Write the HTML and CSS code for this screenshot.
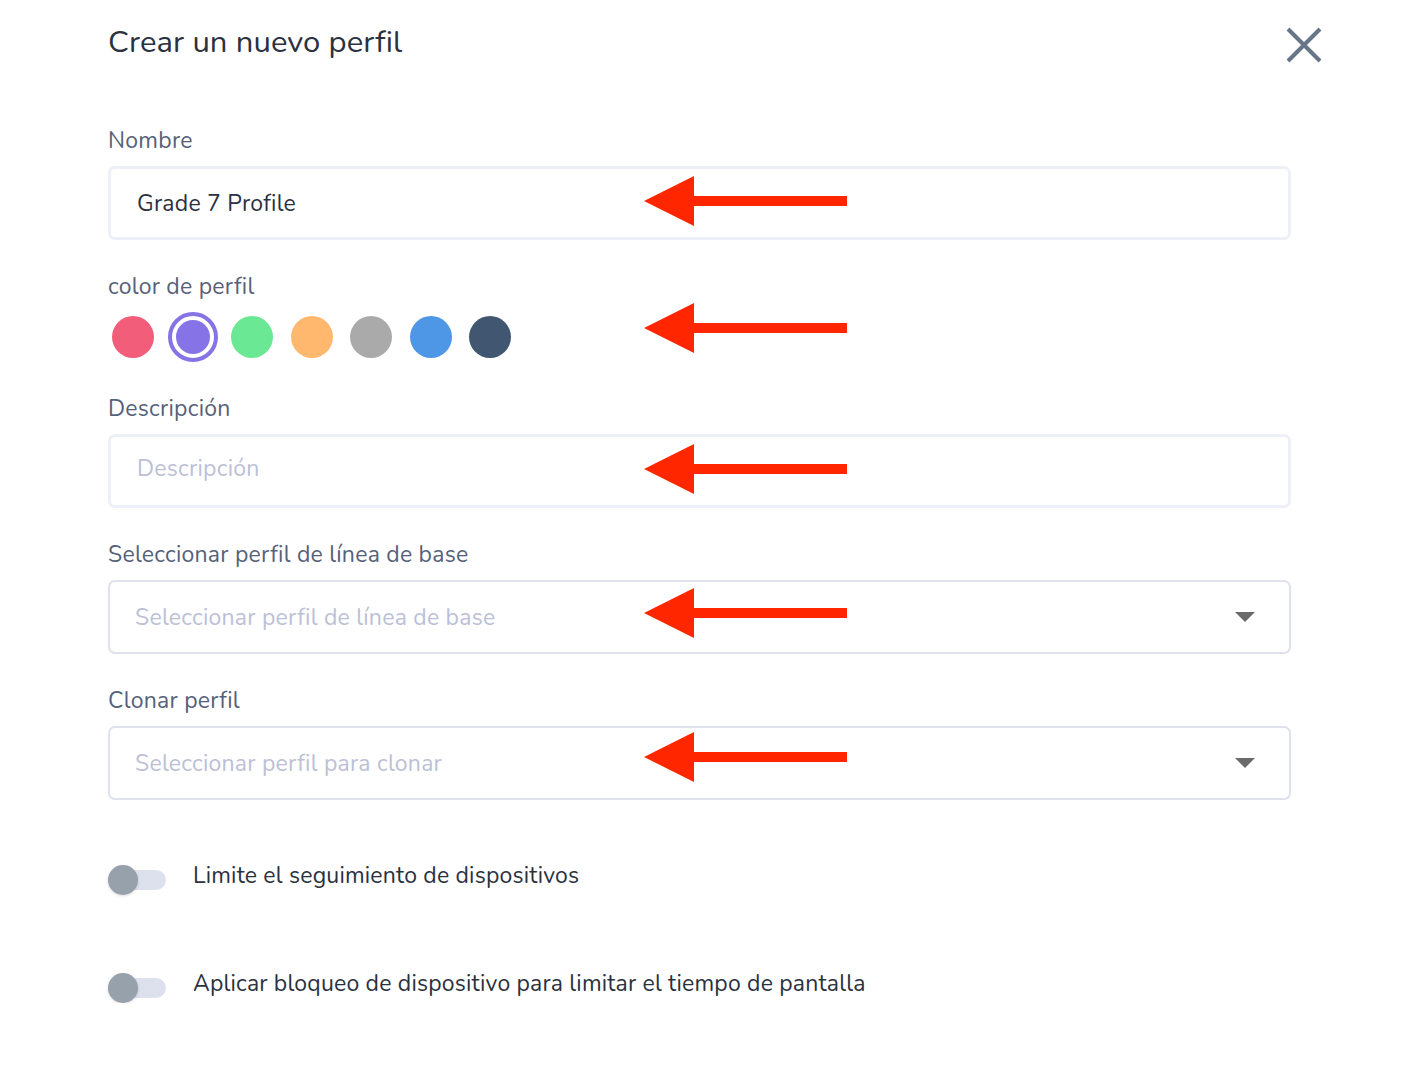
FILE: index.html
```html
<!DOCTYPE html>
<html lang="es">
<head>
<meta charset="utf-8">
<title>Crear un nuevo perfil</title>
<link rel="stylesheet" href="styles.css">
</head>
<body>
<div class="page">
  <div class="header">
    <h1 class="title">Crear un nuevo perfil</h1>
    <button class="close" aria-label="Cerrar">
      <svg width="36" height="36" viewBox="0 0 36 36"><path d="M2 2 L34 34 M34 2 L2 34" stroke="#667587" stroke-width="4" fill="none"/></svg>
    </button>
  </div>

  <form class="form">
    <div class="field field-first">
      <label class="label">Nombre</label>
      <div class="input input-soft"><span class="value">Grade 7 Profile</span></div>
    </div>

    <div class="field">
      <label class="label">color de perfil</label>
      <div class="swatches">
        <span class="swatch c-pink"></span>
        <span class="swatch selected"><span class="dot c-purple"></span></span>
        <span class="swatch c-green"></span>
        <span class="swatch c-orange"></span>
        <span class="swatch c-gray"></span>
        <span class="swatch c-blue"></span>
        <span class="swatch c-navy"></span>
      </div>
    </div>

    <div class="field">
      <label class="label">Descripción</label>
      <div class="input input-soft input-desc"><span class="placeholder">Descripción</span></div>
    </div>

    <div class="field">
      <label class="label">Seleccionar perfil de línea de base</label>
      <div class="input input-select"><span class="placeholder">Seleccionar perfil de línea de base</span><span class="caret"></span></div>
    </div>

    <div class="field">
      <label class="label">Clonar perfil</label>
      <div class="input input-select"><span class="placeholder">Seleccionar perfil para clonar</span><span class="caret"></span></div>
    </div>

    <div class="toggle-row toggle-first">
      <span class="toggle"><span class="knob"></span></span>
      <span class="toggle-label">Limite el seguimiento de dispositivos</span>
    </div>
    <div class="toggle-row toggle-second">
      <span class="toggle"><span class="knob"></span></span>
      <span class="toggle-label">Aplicar bloqueo de dispositivo para limitar el tiempo de pantalla</span>
    </div>
  </form>

  <svg class="arrow a1" width="204" height="52" viewBox="0 0 204 52"><path d="M0 26 L50 1 L50 21 L203 21 L203 31 L50 31 L50 51 Z" fill="#ff2600"/></svg>
  <svg class="arrow a2" width="204" height="52" viewBox="0 0 204 52"><path d="M0 26 L50 1 L50 21 L203 21 L203 31 L50 31 L50 51 Z" fill="#ff2600"/></svg>
  <svg class="arrow a3" width="204" height="52" viewBox="0 0 204 52"><path d="M0 26 L50 1 L50 21 L203 21 L203 31 L50 31 L50 51 Z" fill="#ff2600"/></svg>
  <svg class="arrow a4" width="204" height="52" viewBox="0 0 204 52"><path d="M0 26 L50 1 L50 21 L203 21 L203 31 L50 31 L50 51 Z" fill="#ff2600"/></svg>
  <svg class="arrow a5" width="204" height="52" viewBox="0 0 204 52"><path d="M0 26 L50 1 L50 21 L203 21 L203 31 L50 31 L50 51 Z" fill="#ff2600"/></svg>
</div>
</body>
</html>
```

FILE: styles.css
```css
* { box-sizing: border-box; }
html, body { margin: 0; padding: 0; background: #fff; }
body {
  font-family: "Nunito", "Lato", "Noto Sans", sans-serif;
  color: #2d3748;
}
.page {
  position: relative;
  width: 1406px;
  padding: 22px 0 0 108px;
}
.header {
  width: 1214px;
  height: 40px;
  display: flex;
  justify-content: space-between;
  align-items: flex-start;
}
.title {
  margin: 0;
  font-weight: 400;
  font-size: 31px;
  line-height: 40px;
  letter-spacing: 0.1px;
  color: #2a3140;
}
.close {
  border: 0;
  background: none;
  padding: 0;
  margin-top: 5px;
  width: 36px;
  height: 36px;
}
.close svg { display: block; }

.form { width: 1183px; display: flex; flex-direction: column; }
.field { display: flex; flex-direction: column; gap: 10px; margin-top: 32px; }
.field-first { margin-top: 64px; }
.label {
  font-size: 23px;
  line-height: 30px;
  letter-spacing: 0.25px;
  color: #566179;
}
.input {
  height: 74px;
  border-radius: 7px;
  display: flex;
  align-items: center;
  font-size: 23px;
  letter-spacing: 0.25px;
}
.input-soft {
  border: 3px solid #eef0f8;
  padding: 0 26px;
}
.input-desc { padding-bottom: 6px; }
.input-select {
  border: 2px solid #dfe2ec;
  padding: 0 26px 0 25px;
  justify-content: space-between;
}
.value { color: #2a3140; }
.placeholder { color: #bcc0d6; }
.caret {
  width: 0; height: 0;
  border-left: 10px solid transparent;
  border-right: 10px solid transparent;
  border-top: 10px solid #6b6b6b;
  margin-right: 8px;
}

.swatches { display: flex; align-items: center; height: 50px; padding-left: 4px; gap: 17.5px; }
.swatch {
  width: 42px; height: 42px; border-radius: 50%;
  display: flex; align-items: center; justify-content: center;
  flex: none;
}
.swatch.selected {
  width: 50px; height: 50px;
  margin: 0 -4px;
  border: 4px solid #8673e6;
}
.dot { width: 34px; height: 34px; border-radius: 50%; }
.c-pink { background: #f25e79; }
.c-purple { background: #8673e6; }
.c-green { background: #6ae893; }
.c-orange { background: #ffb86d; }
.c-gray { background: #aaaaaa; }
.c-blue { background: #4e96e6; }
.c-navy { background: #405671; }

.toggle-row { display: flex; align-items: flex-start; gap: 27px; }
.toggle-first { margin-top: 65px; }
.toggle-second { margin-top: 78px; }
.toggle {
  position: relative;
  width: 58px; height: 30px;
  display: flex; align-items: center;
  flex: none;
}
.toggle::before {
  content: "";
  display: block;
  width: 58px; height: 20px;
  border-radius: 10px;
  background: #dde1ee;
}
.knob {
  position: absolute;
  left: 0; top: 0;
  width: 30px; height: 30px; border-radius: 50%;
  background: #97a1ab;
  box-shadow: 0 1px 3px rgba(0,0,0,0.15);
}
.toggle-label {
  font-size: 23px;
  line-height: 22px;
  letter-spacing: 0.2px;
  color: #2a3140;
}

.arrow { position: absolute; left: 644px; }
.a1 { top: 175px; }
.a2 { top: 302px; }
.a3 { top: 443px; }
.a4 { top: 587px; }
.a5 { top: 731px; }
```
